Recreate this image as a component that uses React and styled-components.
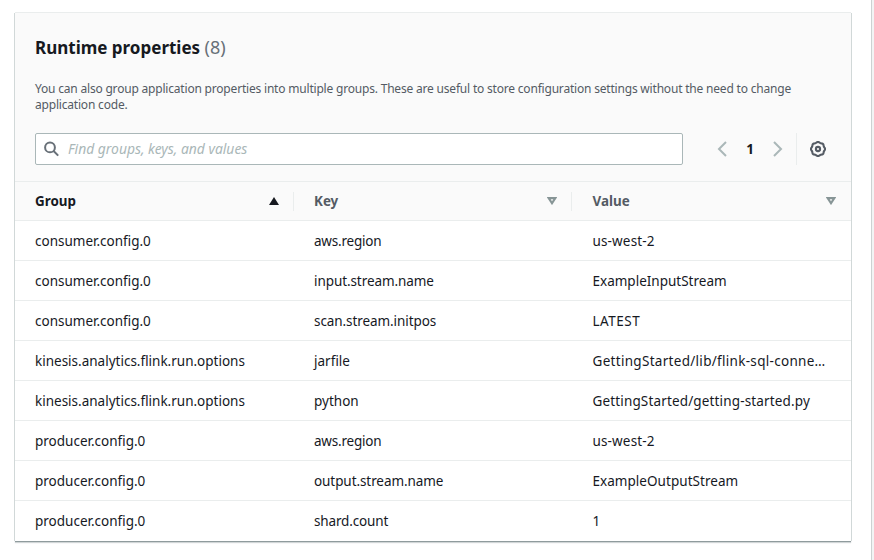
import React from "react";
import styled, { createGlobalStyle } from "styled-components";

const GlobalStyle = createGlobalStyle`
  *, *::before, *::after { box-sizing: border-box; }
  body {
    margin: 0;
    background: #fff;
    color: #16191f;
    font-family: "Noto Sans", "Open Sans", sans-serif;
    font-size: 13.5px;
    overflow: hidden;
  }
`;

const Page = styled.div`
  display: grid;
  grid-template-columns: 871px 3px;
  height: 560px;
`;

const Main = styled.main`
  padding: 13px 20px 0 15px;
`;

const SideEdge = styled.aside`
  border-left: 1px solid #cdd2d2;
  background: #f3f4f4;
`;

const Card = styled.section`
  height: 528px;
  background: #fff;
  box-shadow: 0 -1px 0 #eaeded, -1px 0 0 #d1d8d8, 1px 0 0 #d1d8d8,
    0 1px 0 #8f9b9d, 0 2px 1px rgba(0, 28, 36, 0.18);
`;

const CardHeader = styled.header`
  height: 169px;
  padding: 23px 20px 0;
  background: #fafafa;
  border-bottom: 1px solid #eaeded;
`;

const Title = styled.h2`
  margin: 0;
  font-size: 17px;
  line-height: 24px;
  font-weight: 700;
`;

const Count = styled.span`
  font-size: 18px;
  line-height: 22px;
  font-weight: 400;
  color: #687078;
`;

const Description = styled.p`
  margin: 21px 0 0;
  width: 770px;
  font-size: 12px;
  letter-spacing: -0.195px;
  line-height: 16px;
  color: #545b64;
`;

const Tools = styled.div`
  display: flex;
  align-items: center;
  height: 32px;
  margin-top: 20px;
`;

const SearchField = styled.label`
  display: flex;
  align-items: center;
  width: 648px;
  height: 32px;
  padding-left: 8px;
  gap: 8px;
  background: #fff;
  border: 1px solid #aab7b8;
  border-radius: 2px;
`;

const SearchInput = styled.input`
  flex: 1;
  padding: 0;
  border: 0;
  outline: 0;
  background: transparent;
  font-family: inherit;
  font-size: 13.87px;
  line-height: 20px;
  &::placeholder {
    color: #aab7b8;
    opacity: 1;
    font-style: italic;
  }
`;

const Pagination = styled.nav`
  display: flex;
  align-items: center;
  margin-left: 31px;
`;

const IconButton = styled.button`
  display: flex;
  padding: 0;
  border: 0;
  background: none;
`;

const PageNumber = styled.span`
  width: 40px;
  text-align: center;
  font-weight: 700;
`;

const Preferences = styled.div`
  display: flex;
  align-items: center;
  height: 32px;
  margin-left: 10px;
  padding-left: 13px;
  border-left: 1px solid #eaeded;
`;

const Table = styled.div`
  display: flex;
  flex-direction: column;
`;

const Row = styled.div`
  display: grid;
  grid-template-columns: 278.5px 278.5px 279px;
  align-items: center;
  height: 40px;
  border-bottom: 1px solid #eaeded;
  &:last-child { border-bottom-color: transparent; }
`;

const HeaderRow = styled(Row)`
  height: 39px;
  background: #fafafa;
`;

const HeaderCell = styled.div`
  display: flex;
  align-items: center;
  justify-content: space-between;
  height: 19px;
  padding: 0 14px 0 20.5px;
  border-right: 1px solid #eaeded;
  font-size: 13.4px;
  line-height: 20px;
  font-weight: 700;
  color: ${(p) => (p.$active ? "#16191f" : "#545b64")};
  &:first-child { padding-left: 20px; }
  &:last-child { border-right-color: transparent; }
`;

const Cell = styled.div`
  padding-left: 20.5px;
  line-height: 20px;
  letter-spacing: ${(p) => p.$tracking || 0}px;
  white-space: nowrap;
  &:first-child { padding-left: 20px; }
`;

const SearchIcon = () => (
  <svg width="16" height="16" viewBox="0 0 16 16" fill="none" stroke="#687078" strokeWidth="2">
    <circle cx="6" cy="6.4" r="4.9" />
    <path d="M9.6 10 14.2 14.6" />
  </svg>
);

const Chevron = ({ d }) => (
  <svg width="16" height="16" viewBox="0 0 16 16" fill="none" stroke="#aab7b8" strokeWidth="2">
    <path d={d} />
  </svg>
);

const gearPath = (() => {
  const points = [];
  for (let i = 0; i <= 96; i += 1) {
    const a = (i / 96) * Math.PI * 2;
    const r = 6.7 + 0.35 * Math.cos(a * 8);
    points.push(`${(8 + r * Math.cos(a)).toFixed(2)} ${(8 + r * Math.sin(a)).toFixed(2)}`);
  }
  return `M${points.join("L")}Z`;
})();

const GearIcon = () => (
  <svg width="16" height="16" viewBox="0 0 16 16" fill="none" stroke="#545b64" strokeWidth="2.1">
    <path d={gearPath} />
    <circle cx="8" cy="8" r="2.1" />
  </svg>
);

const SortIcon = ({ active }) => (
  <svg width="10" height="8" viewBox="0 0 10 8">
    {active ? (
      <path d="M5 0 10 8H0Z" fill="#16191f" />
    ) : (
      <path d="M1.7 1.1H8.3L5 6.2Z" fill="none" stroke="#879596" strokeWidth="2.1" />
    )}
  </svg>
);

const columns = ["Group", "Key", "Value"];

const rows = [
  [["consumer.config.0"], ["aws.region", -0.2], ["us-west-2", 0.15]],
  [["consumer.config.0"], ["input.stream.name", -0.08], ["ExampleInputStream"]],
  [["consumer.config.0"], ["scan.stream.initpos", -0.08], ["LATEST", 0.5]],
  [["kinesis.analytics.flink.run.options"], ["jarfile"], ["GettingStarted/lib/flink-sql-conne…", 0.3]],
  [["kinesis.analytics.flink.run.options"], ["python"], ["GettingStarted/getting-started.py", 0.15]],
  [["producer.config.0"], ["aws.region", -0.2], ["us-west-2", 0.15]],
  [["producer.config.0"], ["output.stream.name", -0.08], ["ExampleOutputStream", 0.04]],
  [["producer.config.0"], ["shard.count", -0.15], ["1"]],
];

export default function App() {
  return (
    <Page>
      <GlobalStyle />
      <Main>
        <Card>
          <CardHeader>
            <Title>
              Runtime properties <Count>(8)</Count>
            </Title>
            <Description>
              You can also group application properties into multiple groups. These are useful to
              store configuration settings without the need to change application code.
            </Description>
            <Tools>
              <SearchField>
                <SearchIcon />
                <SearchInput placeholder="Find groups, keys, and values" />
              </SearchField>
              <Pagination>
                <IconButton aria-label="Previous page"><Chevron d="M12 1 5 8l7 7" /></IconButton>
                <PageNumber>1</PageNumber>
                <IconButton aria-label="Next page"><Chevron d="M4 1l7 7-7 7" /></IconButton>
              </Pagination>
              <Preferences>
                <IconButton aria-label="Preferences"><GearIcon /></IconButton>
              </Preferences>
            </Tools>
          </CardHeader>
          <Table>
            <HeaderRow>
              {columns.map((name, i) => (
                <HeaderCell key={name} $active={i === 0}>
                  {name}
                  <SortIcon active={i === 0} />
                </HeaderCell>
              ))}
            </HeaderRow>
            {rows.map((cells, r) => (
              <Row key={r}>
                {cells.map(([text, tracking], c) => (
                  <Cell key={c} $tracking={tracking}>{text}</Cell>
                ))}
              </Row>
            ))}
          </Table>
        </Card>
      </Main>
      <SideEdge />
    </Page>
  );
}
